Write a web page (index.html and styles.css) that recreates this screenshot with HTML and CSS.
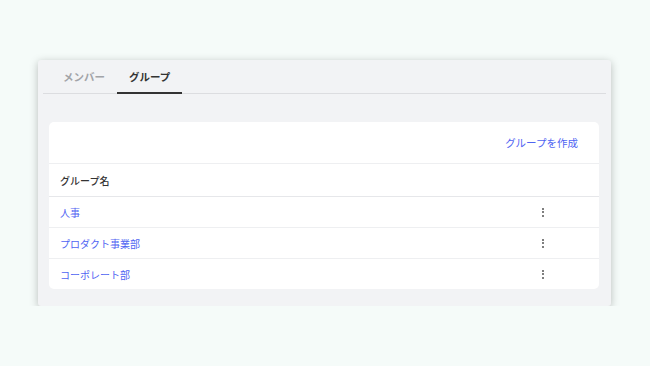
FILE: index.html
```html
<!DOCTYPE html>
<html lang="ja">
<head>
  <meta charset="UTF-8" />
  <title>グループ</title>
  <link rel="stylesheet" href="styles.css">
</head>
<body>
  <div class="panel">
    <div class="tabs">
      <div class="tab">メンバー</div>
      <div class="tab active">グループ</div>
    </div>

    <div class="card">
      <div class="card-head">
        <a class="create-link" href="#">グループを作成</a>
      </div>
      <div class="row head-row">グループ名</div>
      <div class="row">
        <a class="group-link" href="#">人事</a>
        <span class="kebab"><i></i><i></i><i></i></span>
      </div>
      <div class="row">
        <a class="group-link" href="#">プロダクト事業部</a>
        <span class="kebab"><i></i><i></i><i></i></span>
      </div>
      <div class="row">
        <a class="group-link" href="#">コーポレート部</a>
        <span class="kebab"><i></i><i></i><i></i></span>
      </div>
    </div>
  </div>
</body>
</html>
```

FILE: styles.css
```css
body {
  margin: 0;
  padding: 60px 39px 0 38px;
  background-color: #f5fbf9;
  font-family: "Noto Sans CJK JP", "Noto Sans", sans-serif;
  font-size: 10px;
  color: #333;
}

.panel {
  width: 573px;
  height: 246px;
  box-sizing: border-box;
  background-color: #f2f3f5;
  border-radius: 3px;
  box-shadow: 0 2px 8px rgba(0, 0, 0, 0.25);
  padding: 0 5px;
}

.tabs {
  display: flex;
  height: 33px;
  padding-left: 8px;
  border-bottom: 1px solid #dcdde0;
}

.tab {
  display: flex;
  align-items: center;
  padding: 0 12px;
  font-weight: bold;
  font-size: 10.5px;
  color: #a2a4a8;
  border-bottom: 2px solid transparent;
  margin-bottom: -1px;
}

.tab.active {
  color: #333;
  border-bottom-color: #333;
}

.card {
  margin: 28px 7px 0 6px;
  background: white;
  border-radius: 5px;
}

.card-head {
  height: 41px;
  display: flex;
  align-items: center;
  justify-content: flex-end;
  padding-right: 21px;
  border-bottom: 1px solid #eeeff1;
}

a {
  text-decoration: none;
  color: #5064f2;
}

.create-link {
  font-size: 10.5px;
}

.row {
  display: flex;
  align-items: center;
  justify-content: space-between;
  height: 30px;
  padding: 0 55px 0 11px;
  border-bottom: 1px solid #eeeff1;
}

.row:last-child {
  border-bottom: none;
}

.head-row {
  height: 32px;
  font-weight: 500;
  color: #333;
  border-bottom: 1px solid #e6e7ea;
}

.kebab {
  display: flex;
  flex-direction: column;
  gap: 1.5px;
}

.kebab i {
  display: block;
  width: 2px;
  height: 2px;
  border-radius: 1px;
  background: #555;
}
```
